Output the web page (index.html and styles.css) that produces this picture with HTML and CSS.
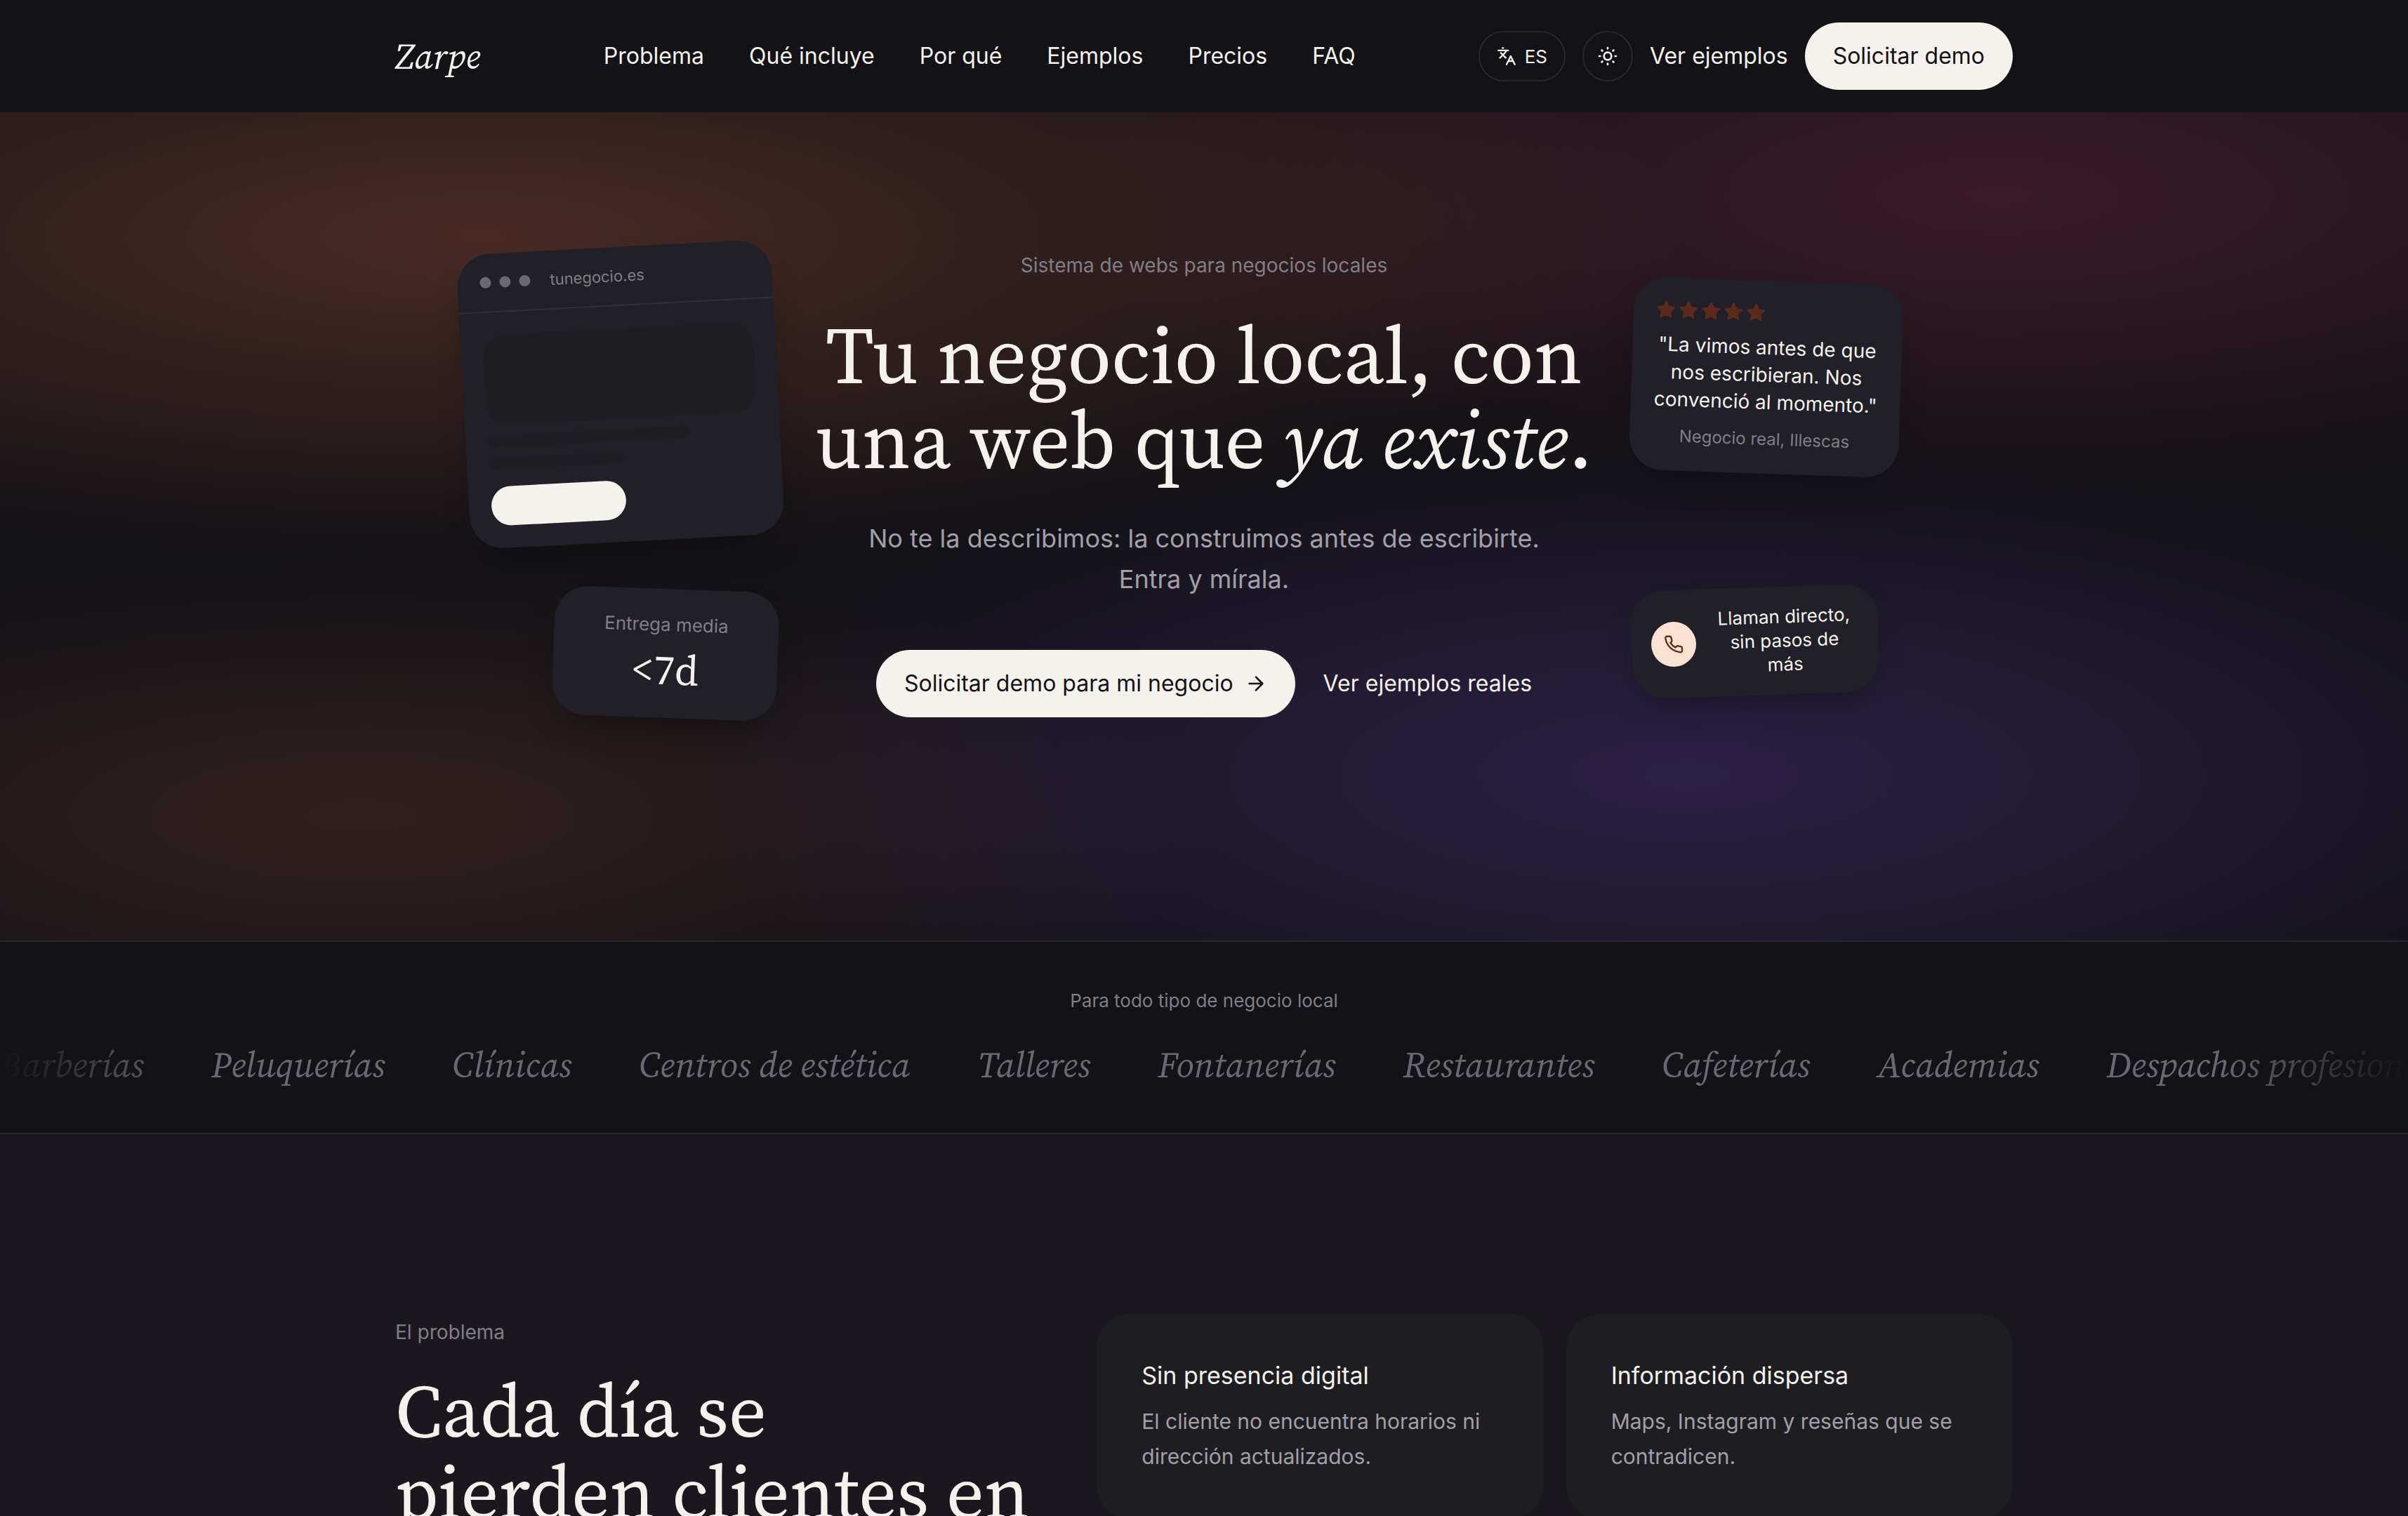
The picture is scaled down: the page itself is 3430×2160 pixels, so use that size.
FILE: index.html
```
<!DOCTYPE html>
<html lang="es">
<head>
    <meta charset="UTF-8">
    <meta name="viewport" content="width=device-width, initial-scale=1.0">
    <title>Zarpe</title>
    <link rel="stylesheet" href="styles.css">
</head>
<body>
    <!-- Cabecera -->
    <header class="header">
        <div class="container header-inner">
            <a href="#" class="logo">Zarpe</a>
            <nav class="nav">
                <a href="#problema">Problema</a>
                <a href="#incluye">Qué incluye</a>
                <a href="#porque">Por qué</a>
                <a href="#ejemplos">Ejemplos</a>
                <a href="#precios">Precios</a>
                <a href="#faq">FAQ</a>
            </nav>
            <div class="actions">
                <button type="button" class="chip">
                    <svg class="icon-sm" viewBox="0 0 24 24" fill="none" stroke="currentColor" stroke-width="2" stroke-linecap="round" stroke-linejoin="round" aria-hidden="true"><path d="m5 8 6 6M4 14l6-6 2-3M2 5h12M7 2h1M22 22l-5-10-5 10M14 18h6"/></svg>
                    ES
                </button>
                <button type="button" class="chip chip-round" aria-label="Cambiar tema">
                    <svg class="icon" viewBox="0 0 24 24" fill="none" stroke="currentColor" stroke-width="2" stroke-linecap="round" stroke-linejoin="round" aria-hidden="true"><circle cx="12" cy="12" r="4"/><path d="M12 3v1M12 20v1M3 12h1M20 12h1M18.364 5.636l-.707.707M6.343 17.657l-.707.707M5.636 5.636l.707.707M17.657 17.657l.707.707"/></svg>
                </button>
                <a href="#ejemplos" class="link">Ver ejemplos</a>
                <a href="#demo" class="btn">Solicitar demo</a>
            </div>
        </div>
    </header>

    <!-- Hero -->
    <section class="hero">
        <div class="hero-content">
            <p class="eyebrow">Sistema de webs para negocios locales</p>
            <h1>Tu negocio local, con<br>una web que <em>ya existe</em>.</h1>
            <p class="lead">No te la describimos: la construimos antes de escribirte.<br>Entra y mírala.</p>
            <div class="hero-buttons">
                <a href="#demo" class="btn">Solicitar demo para mi negocio
                    <svg class="icon" viewBox="0 0 24 24" fill="none" stroke="currentColor" stroke-width="2" stroke-linecap="round" stroke-linejoin="round" aria-hidden="true"><path d="M5 12h14M12 5l7 7-7 7"/></svg>
                </a>
                <a href="#ejemplos" class="link">Ver ejemplos reales</a>
            </div>
        </div>

        <!-- Tarjetas flotantes -->
        <div class="float float-browser">
            <div class="browser-bar">
                <span class="dot"></span><span class="dot"></span><span class="dot"></span>
                <span class="browser-url">tunegocio.es</span>
            </div>
            <div class="browser-body">
                <div class="sk sk-image"></div>
                <div class="sk sk-line"></div>
                <div class="sk sk-line sk-short"></div>
                <div class="sk-button"></div>
            </div>
        </div>

        <div class="float float-stat">
            <span class="stat-label">Entrega media</span>
            <span class="stat-value">&lt;7d</span>
        </div>

        <div class="float float-review">
            <div class="stars">
                <svg class="star" viewBox="0 0 24 24"><path d="M12 2l3.100 6.300 6.900 1-5 4.900 1.200 6.800-6.200-3.200L5.800 21 7 14.200l-5-4.900 6.900-1z"/></svg>
                <svg class="star" viewBox="0 0 24 24"><path d="M12 2l3.100 6.300 6.900 1-5 4.900 1.200 6.800-6.200-3.200L5.800 21 7 14.200l-5-4.900 6.900-1z"/></svg>
                <svg class="star" viewBox="0 0 24 24"><path d="M12 2l3.100 6.300 6.900 1-5 4.900 1.200 6.800-6.200-3.200L5.800 21 7 14.200l-5-4.900 6.900-1z"/></svg>
                <svg class="star" viewBox="0 0 24 24"><path d="M12 2l3.100 6.300 6.900 1-5 4.900 1.200 6.800-6.200-3.200L5.800 21 7 14.200l-5-4.900 6.900-1z"/></svg>
                <svg class="star" viewBox="0 0 24 24"><path d="M12 2l3.100 6.300 6.900 1-5 4.900 1.200 6.800-6.200-3.200L5.800 21 7 14.200l-5-4.900 6.900-1z"/></svg>
            </div>
            <p class="review-text">"La vimos antes de que nos escribieran. Nos convenció al momento."</p>
            <p class="review-author">Negocio real, Illescas</p>
        </div>

        <div class="float float-call">
            <span class="call-icon">
                <svg class="icon-sm" viewBox="0 0 24 24" fill="none" stroke="currentColor" stroke-width="2" stroke-linecap="round" stroke-linejoin="round" aria-hidden="true"><path d="M22 16.920v3a2 2 0 0 1-2.180 2 19.790 19.790 0 0 1-8.630-3.070 19.500 19.500 0 0 1-6-6 19.790 19.790 0 0 1-3.070-8.670A2 2 0 0 1 4.110 2h3a2 2 0 0 1 2 1.720c.127.960.361 1.903.700 2.810a2 2 0 0 1-.450 2.110L8.090 9.910a16 16 0 0 0 6 6l1.270-1.270a2 2 0 0 1 2.110-.450c.907.339 1.850.573 2.810.700A2 2 0 0 1 22 16.920z"/></svg>
            </span>
            <span class="call-text">Llaman directo, sin pasos de más</span>
        </div>
    </section>

    <!-- Sectores -->
    <section class="sectors">
        <p class="sectors-label">Para todo tipo de negocio local</p>
        <div class="marquee">
            <span>Barberías</span>
            <span>Peluquerías</span>
            <span>Clínicas</span>
            <span>Centros de estética</span>
            <span>Talleres</span>
            <span>Fontanerías</span>
            <span>Restaurantes</span>
            <span>Cafeterías</span>
            <span>Academias</span>
            <span>Despachos profesionales</span>
        </div>
    </section>

    <!-- El problema -->
    <section class="problem" id="problema">
        <div class="container problem-grid">
            <div class="problem-intro">
                <p class="eyebrow">El problema</p>
                <h2>Cada día se<br>pierden clientes en</h2>
            </div>
            <div class="cards">
                <article class="card">
                    <h3>Sin presencia digital</h3>
                    <p>El cliente no encuentra horarios ni dirección actualizados.</p>
                </article>
                <article class="card">
                    <h3>Información dispersa</h3>
                    <p>Maps, Instagram y reseñas que se contradicen.</p>
                </article>
            </div>
        </div>
    </section>
</body>
</html>
```
FILE: styles.css
```
:root {
    --bg: #131217;
    --bg-soft: #1b171e;
    --surface: #211f27;
    --surface-2: #1e1d22;
    --line: #28272c;
    --text: #f5f1ec;
    --text-2: #a39fa8;
    --text-3: #827e88;
    --serif: "Source Serif 4", "Source Serif Pro", "Liberation Serif", serif;
    --sans: "Inter", sans-serif;
}

* {
    box-sizing: border-box;
    margin: 0;
    padding: 0;
}

body {
    background: var(--bg-soft);
    color: var(--text);
    font-family: var(--sans);
    font-size: 32px;
    line-height: 48px;
    height: 100vh;
    overflow: hidden;
}

a {
    color: inherit;
    text-decoration: none;
}

.container {
    max-width: 2400px;
    margin: 0 auto;
    padding: 0 48px;
}

.icon {
    width: 32px;
    height: 32px;
    flex-shrink: 0;
}

.icon-sm {
    width: 28px;
    height: 28px;
    flex-shrink: 0;
}

/* Cabecera */
.header {
    background: var(--bg);
}

.header-inner {
    display: flex;
    align-items: center;
    justify-content: space-between;
    height: 160px;
}

.logo {
    font-family: var(--serif);
    font-style: italic;
    font-size: 51px;
}

.nav {
    display: flex;
    gap: 64px;
}

.actions {
    display: flex;
    align-items: center;
    gap: 24px;
}

.chip {
    display: flex;
    align-items: center;
    justify-content: center;
    gap: 12px;
    height: 72px;
    padding: 0 24px;
    border: 2px solid var(--line);
    border-radius: 36px;
    background: none;
    color: var(--text);
    font-family: var(--sans);
    font-size: 26px;
}

.chip-round {
    width: 72px;
    padding: 0;
}

.btn {
    display: flex;
    align-items: center;
    gap: 16px;
    height: 96px;
    padding: 0 40px;
    border-radius: 48px;
    background: var(--text);
    color: #131217;
}

/* Hero */
.hero {
    position: relative;
    padding: 192px 48px 318px;
    text-align: center;
    background:
        radial-gradient(50% 40% at 20% 15%, rgba(200, 100, 64, 0.300), transparent),
        radial-gradient(40% 37% at 83% 10%, rgba(164, 52, 84, 0.280), transparent),
        radial-gradient(42% 40% at 70% 80%, rgba(92, 60, 160, 0.350), transparent),
        radial-gradient(36% 32% at 15% 85%, rgba(170, 90, 60, 0.200), transparent),
        var(--bg);
}

.eyebrow {
    font-size: 28px;
    line-height: 52px;
    color: var(--text-3);
}

h1, h2 {
    font-family: var(--serif);
    font-weight: 400;
}

h1 {
    margin-top: 42px;
    font-size: 114px;
    line-height: 121px;
}

.lead {
    margin-top: 50px;
    font-size: 36px;
    line-height: 58px;
    color: var(--text-2);
}

.hero-buttons {
    display: flex;
    align-items: center;
    justify-content: center;
    gap: 40px;
    margin-top: 72px;
}

/* Tarjetas flotantes */
.float {
    position: absolute;
    border-radius: 48px;
    background: var(--surface);
    box-shadow: 0 24px 48px -16px rgba(0, 0, 0, 0.350);
}

.float-browser {
    left: calc(50% - 1055px);
    top: 192px;
    width: 448px;
    transform: rotate(-3deg);
}

.browser-bar {
    display: flex;
    align-items: center;
    gap: 12px;
    padding: 24px 32px;
    border-bottom: 2px solid #312f36;
}

.dot {
    width: 16px;
    height: 16px;
    border-radius: 50%;
    background: #6c6873;
}

.browser-url {
    margin-left: 16px;
    font-size: 22px;
    line-height: 34px;
    color: var(--text-3);
}

.browser-body {
    display: grid;
    gap: 16px;
    padding: 32px;
}

.sk {
    border-radius: 8px;
    background: var(--surface-2);
}

.sk-image {
    height: 128px;
    border-radius: 32px;
}

.sk-line {
    width: 75%;
    height: 16px;
}

.sk-short {
    width: 50%;
}

.sk-button {
    width: 50%;
    height: 56px;
    margin-top: 8px;
    border-radius: 28px;
    background: var(--text);
}

.float-stat {
    left: calc(50% - 927px);
    top: 679px;
    width: 320px;
    padding: 30px 32px 34px;
    display: flex;
    flex-direction: column;
    transform: rotate(2deg);
}

.stat-label {
    font-size: 26px;
    line-height: 42px;
    color: var(--text-3);
}

.stat-value {
    margin-top: 8px;
    font-family: var(--serif);
    font-size: 60px;
    line-height: 70px;
}

.float-review {
    left: calc(50% + 609px);
    top: 240px;
    width: 384px;
    padding: 32px;
    transform: rotate(2deg);
}

.stars {
    display: flex;
    gap: 4px;
}

.star {
    width: 28px;
    height: 28px;
    fill: #5c2a1a;
    stroke: #5c2a1a;
    stroke-width: 2;
    stroke-linejoin: round;
}

.review-text {
    margin-top: 16px;
    font-size: 28px;
    line-height: 39px;
}

.review-author {
    margin-top: 16px;
    font-size: 24px;
    line-height: 34px;
    color: var(--text-3);
}

.float-call {
    left: calc(50% + 609px);
    top: 677px;
    width: 352px;
    padding: 26px 28px;
    display: flex;
    align-items: center;
    gap: 20px;
    transform: rotate(-2deg);
}

.call-icon {
    display: grid;
    place-items: center;
    flex-shrink: 0;
    width: 64px;
    height: 64px;
    border-radius: 50%;
    background: #fae1d2;
    color: #5c2a1a;
}

.call-text {
    flex: 1;
    font-size: 26px;
    line-height: 34px;
}

/* Sectores */
.sectors {
    padding: 62px 0 60px;
    border-top: 2px solid var(--line);
    border-bottom: 2px solid var(--line);
    background: var(--bg);
    overflow: hidden;
}

.sectors-label {
    font-size: 26px;
    line-height: 44px;
    text-align: center;
    color: var(--text-3);
}

.marquee {
    display: flex;
    gap: 96px;
    margin-top: 32px;
    font-family: var(--serif);
    font-style: italic;
    font-size: 51px;
    line-height: 74px;
    white-space: nowrap;
    color: #6c6873;
    -webkit-mask-image: linear-gradient(90deg, transparent, #000 8%, #000 92%, transparent);
    mask-image: linear-gradient(90deg, transparent, #000 8%, #000 92%, transparent);
}

/* El problema */
.problem {
    padding: 256px 0;
}

.problem-grid {
    display: grid;
    grid-template-columns: minmax(0, 9fr) minmax(0, 13fr);
    gap: 96px;
}

h2 {
    margin-top: 28px;
    font-size: 106px;
    line-height: 116px;
    white-space: nowrap;
}

.cards {
    display: grid;
    grid-template-columns: 1fr 1fr;
    gap: 32px;
    align-items: start;
}

.card {
    padding: 64px;
    border-radius: 48px;
    background: var(--surface-2);
}

.card h3 {
    font-size: 34px;
    font-weight: 400;
    line-height: 48px;
}

.card p {
    margin-top: 16px;
    font-size: 30px;
    line-height: 50px;
    color: var(--text-2);
}
```
